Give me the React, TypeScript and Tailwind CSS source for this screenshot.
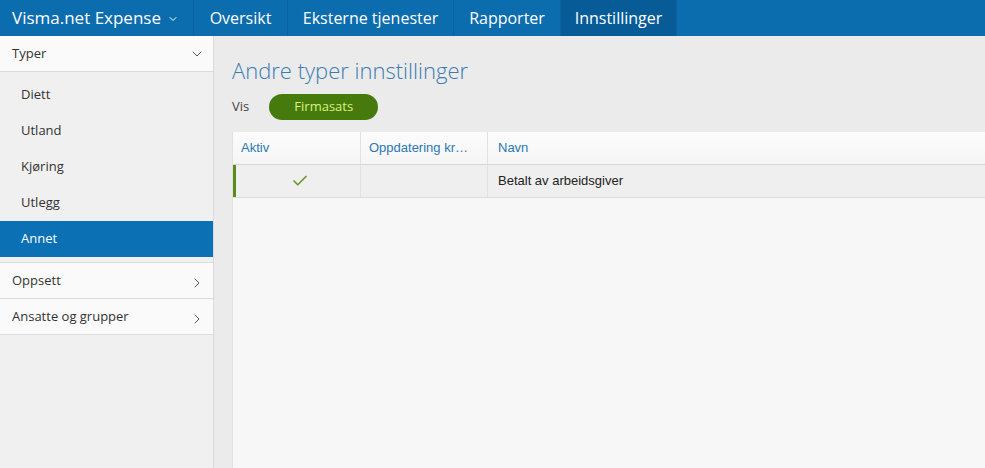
import { ChevronDown, ChevronRight, Check } from "lucide-react";

const tabs = [
  { label: "Oversikt", w: "w-[94px]" },
  { label: "Eksterne tjenester", w: "w-[166px]" },
  { label: "Rapporter", w: "w-[107px]" },
  { label: "Innstillinger", w: "w-[116px]", active: true },
];

const typer = ["Diett", "Utland", "Kjøring", "Utlegg", "Annet"];

const App = () => {
  return (
    <div className="h-[468px] flex flex-col overflow-hidden font-['Open_Sans',sans-serif]">
      {/* Top nav */}
      <div className="h-9 flex bg-[#0b6cae] text-white">
        <div className="w-[193px] flex items-center pl-3 text-[17px] gap-1.5">
          <span>Visma.net Expense</span>
          <ChevronDown className="w-3 h-3 mt-0.5" strokeWidth={2} />
        </div>
        {tabs.map((tab) => (
          <div
            key={tab.label}
            className={`${tab.w} flex items-center justify-center text-[16px] border-l border-[#0a62a0] ${
              tab.active ? "bg-[#075b96]" : ""
            }`}
          >
            {tab.label}
          </div>
        ))}
        <div className="flex-1 border-l border-[#0a62a0]" />
      </div>

      <div className="flex-1 flex">
        {/* Sidebar */}
        <div className="w-[214px] bg-[#f0f0f0] border-r border-[#dadada] text-[13px] text-[#333]">
          <div className="h-9 flex items-center justify-between pl-3 pr-2 bg-[#fafafa] border-b border-[#dcdcdc]">
            <span>Typer</span>
            <ChevronDown className="w-4 h-4 text-[#555]" strokeWidth={1.5} />
          </div>
          <div className="pt-[5px]">
            {typer.map((item) => (
              <div
                key={item}
                className={`h-9 flex items-center pl-[21px] ${
                  item === "Annet" ? "bg-[#0b70b4] text-white" : ""
                }`}
              >
                {item}
              </div>
            ))}
          </div>
          <div className="mt-[5px] border-t border-[#dcdcdc]">
            {["Oppsett", "Ansatte og grupper"].map((item) => (
              <div
                key={item}
                className="h-9 flex items-center justify-between pl-3 pr-2 bg-[#fafafa] border-b border-[#dcdcdc]"
              >
                <span>{item}</span>
                <ChevronRight className="w-4 h-4 text-[#555] mt-1" strokeWidth={1.5} />
              </div>
            ))}
          </div>
        </div>

        {/* Main */}
        <div className="flex-1 flex flex-col bg-[#ebebeb] pl-[18px] pt-[19px]">
          <h1 className="text-[22px] leading-[30px] font-light text-[#3b7bb3]">
            Andre typer innstillinger
          </h1>
          <div className="mt-[9px] flex items-center gap-5 text-[13px] text-[#444]">
            <span>Vis</span>
            <div className="w-[109px] h-[26px] rounded-full bg-[#467a0d] text-[#d8f27c] flex items-center justify-center">
              Firmasats
            </div>
          </div>
          <div className="mt-3 flex-1 bg-[#f7f7f7] border-l border-[#e2e2e2] font-['Liberation_Sans',Arial,sans-serif] text-[13px]">
            <div className="h-[33px] flex bg-gradient-to-b from-[#fcfcfc] to-[#f5f5f5] border-b border-[#d6d6d6] text-[#2b78b4]">
              <div className="w-32 flex items-center pl-2 border-r border-[#e2e2e2]">Aktiv</div>
              <div className="w-[127px] flex items-center pl-2 border-r border-[#e2e2e2] truncate">
                Oppdatering kr…
              </div>
              <div className="flex-1 flex items-center pl-[10px]">Navn</div>
            </div>
            <div className="h-[33px] flex bg-[#efefef] border-b border-[#dcdcdc] text-[#222]">
              <div className="w-32 flex items-center justify-center border-l-[3px] border-[#5b8a1f] border-r border-r-[#e2e2e2]">
                <Check className="w-[18px] h-[18px] text-[#6b9a2c] ml-1" strokeWidth={2.25} />
              </div>
              <div className="w-[127px] border-r border-[#e2e2e2]" />
              <div className="flex-1 flex items-center pl-[10px]">Betalt av arbeidsgiver</div>
            </div>
          </div>
        </div>
      </div>
    </div>
  );
};

export default App;
